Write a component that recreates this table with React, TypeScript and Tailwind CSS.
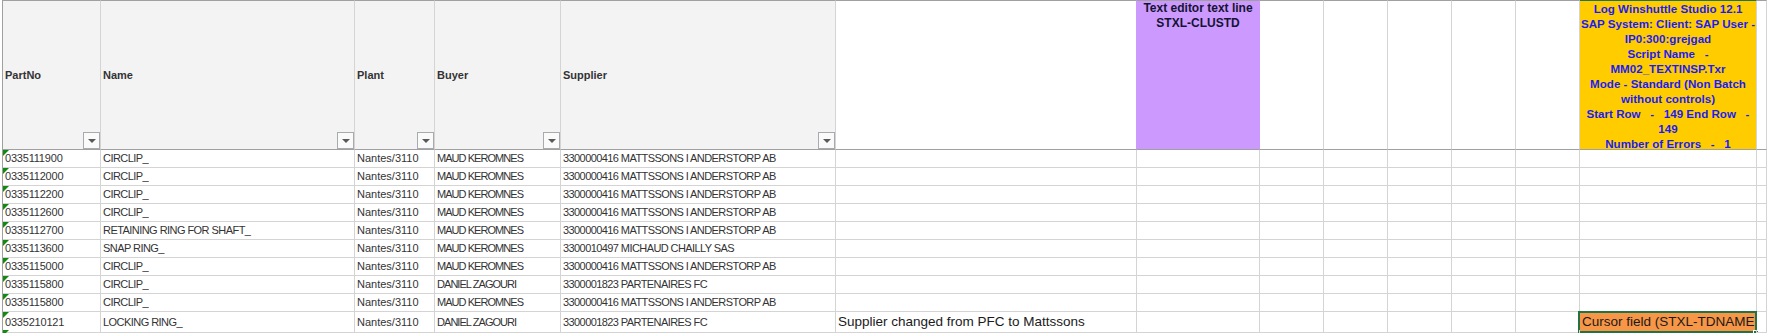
import React from "react";

const COLS =
  "grid grid-cols-[98px_254px_80px_126px_275px_301px_123px_64px_64px_64px_64px_64px_177px_1fr]";

type Row = {
  part: string;
  name: string;
  buyer: string;
  supplier: string;
  comment?: string;
  cursor?: string;
};

const MATT = "3300000416 MATTSSONS I ANDERSTORP AB";
const PFC = "3300001823 PARTENAIRES FC";
const MAUD = "MAUD KEROMNES";
const DANIEL = "DANIEL ZAGOURI";

const rows: Row[] = [
  { part: "0335111900", name: "CIRCLIP_", buyer: MAUD, supplier: MATT },
  { part: "0335112000", name: "CIRCLIP_", buyer: MAUD, supplier: MATT },
  { part: "0335112200", name: "CIRCLIP_", buyer: MAUD, supplier: MATT },
  { part: "0335112600", name: "CIRCLIP_", buyer: MAUD, supplier: MATT },
  { part: "0335112700", name: "RETAINING RING FOR SHAFT_", buyer: MAUD, supplier: MATT },
  { part: "0335113600", name: "SNAP RING_", buyer: MAUD, supplier: "3300010497 MICHAUD CHAILLY SAS" },
  { part: "0335115000", name: "CIRCLIP_", buyer: MAUD, supplier: MATT },
  { part: "0335115800", name: "CIRCLIP_", buyer: DANIEL, supplier: PFC },
  { part: "0335115800", name: "CIRCLIP_", buyer: MAUD, supplier: MATT },
  {
    part: "0335210121",
    name: "LOCKING RING_",
    buyer: DANIEL,
    supplier: PFC,
    comment: "Supplier changed from PFC to Mattssons",
    cursor: "Cursor field (STXL-TDNAME",
  },
  { part: "", name: "", buyer: "", supplier: "" },
];

function FilterButton() {
  return (
    <div className="absolute right-0 bottom-0 w-[17px] h-[17px] border border-[#a9a9b0] bg-[#fafafa] flex items-center justify-center">
      <div className="mt-[1px] w-0 h-0 border-l-[4px] border-r-[4px] border-t-[4px] border-l-transparent border-r-transparent border-t-[#595959]" />
    </div>
  );
}

function HeadCell({ label }: { label: string }) {
  return (
    <div className="relative h-full bg-[#f3f3f3] border-t border-b border-t-[#a0a0a0] border-b-[#a0a0a0] border-r border-r-[#d4d4d4] flex items-center pl-[2px]">
      <span className="text-[11px] font-bold text-[#333]">{label}</span>
      <FilterButton />
    </div>
  );
}

function PlainHead({ right = "border-r-[#d4d4d4]" }: { right?: string }) {
  return (
    <div
      className={`h-full bg-white border-t border-b border-t-[#a0a0a0] border-b-[#a0a0a0] border-r ${right}`}
    />
  );
}

const yellowLines = [
  "Log Winshuttle Studio 12.1",
  "SAP System: Client: SAP User -",
  "IP0:300:grejgad",
  "Script Name   -",
  "MM02_TEXTINSP.Txr",
  "Mode - Standard (Non Batch",
  "without controls)",
  "Start Row   -   149 End Row   -",
  "149",
  "Number of Errors   -   1",
];

function Cell({
  children,
  className = "",
}: {
  children?: React.ReactNode;
  className?: string;
}) {
  return (
    <div
      className={`relative h-full border-r border-b border-[#d4d4d4] flex items-center overflow-hidden whitespace-nowrap ${className}`}
    >
      {children}
    </div>
  );
}

export default function App() {
  return (
    <div className="w-[1767px] h-[333px] overflow-hidden bg-white pl-[2px] font-['Liberation_Sans',Arial,sans-serif]">
      <div className="border-l border-[#a0a0a0]">
        {/* Header row */}
        <div className={`${COLS} h-[150px]`}>
          <HeadCell label="PartNo" />
          <HeadCell label="Name" />
          <HeadCell label="Plant" />
          <HeadCell label="Buyer" />
          <HeadCell label="Supplier" />
          <PlainHead right="border-r-[#cc99ff]" />
          <div className="h-full bg-[#cc99ff] border-t border-b border-t-[#a0a0a0] border-b-[#a0a0a0] border-r border-r-[#cc99ff] overflow-hidden">
            <div className="text-center text-[12px] font-bold leading-[15px] text-[#141432]">
              <div>Text editor text line</div>
              <div>STXL-CLUSTD</div>
            </div>
          </div>
          <PlainHead />
          <PlainHead />
          <PlainHead />
          <PlainHead />
          <PlainHead />
          <div className="h-full bg-[#ffcc00] border-t border-b border-t-[#217346] border-b-[#a0a0a0] border-r border-r-[#d4d4d4] overflow-hidden">
            <div className="text-center text-[11.6px] font-bold leading-[15px] text-[#1c1cf0] whitespace-pre">
              {yellowLines.map((l, i) => (
                <div key={i}>{l}</div>
              ))}
            </div>
          </div>
          <PlainHead />
        </div>

        {/* Data rows */}
        {rows.map((r, i) => (
          <div key={i} className={`${COLS} h-[18px]`}>
            <Cell className="pl-[2px] text-[11px] text-[#333] tracking-[-0.2px]">
              <div className="absolute left-0 top-0 w-0 h-0 border-t-[6px] border-r-[6px] border-t-[#118a11] border-r-transparent" />
              {r.part}
            </Cell>
            <Cell className="pl-[2px] text-[11px] text-[#333] tracking-[-0.55px]">{r.name}</Cell>
            <Cell className="pl-[2px] text-[11px] text-[#333]">{r.part ? "Nantes/3110" : ""}</Cell>
            <Cell className="pl-[2px] text-[11px] text-[#333] tracking-[-0.95px]">{r.buyer}</Cell>
            <Cell className="pl-[2px] text-[11px] text-[#333] tracking-[-0.58px]">{r.supplier}</Cell>
            <Cell className="pl-[2px] text-[13.5px] text-[#1a1a1a]">{r.comment}</Cell>
            <Cell />
            <Cell />
            <Cell />
            <Cell />
            <Cell />
            <Cell />
            {r.cursor ? (
              <div className="relative h-full border-r border-b border-[#d4d4d4] bg-[#f79646]">
                <div className="h-full flex items-center overflow-hidden whitespace-nowrap pl-[2px] text-[13.5px] text-[#1a1a1a]">
                  {r.cursor}
                </div>
                <div className="absolute -left-[2px] -top-[1px] -right-[1px] -bottom-[1px] border-2 border-[#217346]" />
                <div className="absolute -right-[3px] -bottom-[4px] w-[6px] h-[6px] bg-[#217346] border border-white" />
              </div>
            ) : (
              <Cell />
            )}
            <Cell />
          </div>
        ))}
      </div>
    </div>
  );
}
